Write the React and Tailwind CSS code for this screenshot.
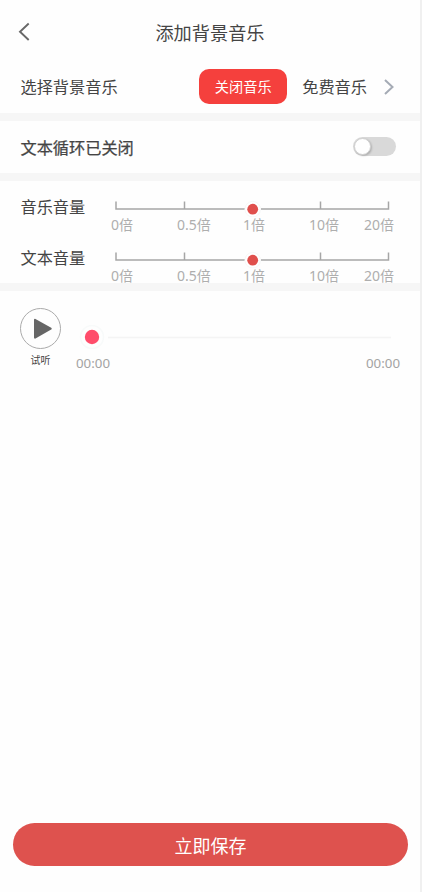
const steps = ['0倍', '0.5倍', '1倍', '10倍', '20倍'];

function Divider() {
  return <div className="h-2 shrink-0 bg-[#f6f6f6]" />;
}

function VolumeRow({ label }) {
  return (
    <div className="flex h-[51px] pl-[20.5px]">
      <div className="w-[90.5px] pt-[13px] text-[16.2px] leading-6">{label}</div>
      <div className="pt-4">
        <svg className="block" width="284" height="20" fill="none">
          <path d="M5 4.5V12H134M150 12H277.5V4.5M73.5 4.5V12M209.5 4.5V12" stroke="#a6a6a6" strokeWidth="1.5" />
          <circle cx="141.7" cy="12.2" r="7.8" fill="#fff" stroke="#f4f5f5" strokeWidth="0.8" />
          <circle cx="141.7" cy="12.2" r="5.4" fill="#e04f4c" />
        </svg>
        <div className="grid grid-cols-[66px_66px_66px_55px_31px] font-['Noto_Sans','Noto_Sans_CJK_SC',sans-serif] text-sm leading-4 text-[#aeaeae]">
          {steps.map((step) => (
            <span key={step} className="whitespace-nowrap">{step}</span>
          ))}
        </div>
      </div>
    </div>
  );
}

export default function App() {
  return (
    <div className="flex h-[892px] w-[422px] flex-col overflow-hidden border-r-2 border-[#f0f0f0] bg-[#fefefe] font-['Noto_Sans_CJK_SC',sans-serif] text-[#444]">
      <header className="grid h-[61px] grid-cols-[60px_1fr_60px] items-center pt-0.5">
        <button className="pl-[18px]" aria-label="返回">
          <svg width="13" height="20" fill="none" stroke="#686868" strokeWidth="1.9">
            <path d="M10.7 1.5L2 9.7L10.7 18" />
          </svg>
        </button>
        <h1 className="text-center text-[18.2px] leading-7">添加背景音乐</h1>
      </header>

      <section className="flex h-[52px] items-center pb-px pl-[20.5px] text-[16.2px]">
        <span>选择背景音乐</span>
        <button className="ml-auto h-[35px] w-[88px] rounded-[10px] bg-[#f5403d] text-[14.2px] text-white">关闭音乐</button>
        <span className="ml-[15px]">免费音乐</span>
        <svg className="mr-[25px] ml-[16px]" width="12" height="16" fill="none" stroke="#a5abb5" strokeWidth="2">
          <path d="M2 1L9.5 8L2 15" />
        </svg>
      </section>
      <Divider />

      <section className="flex h-[52px] items-center justify-between pr-6 pb-px pl-[20.5px]">
        <span className="pt-px text-[16.2px] [-webkit-text-stroke:0.25px_#444]">文本循环已关闭</span>
        <button className="h-[19px] w-[43px] rounded-full bg-[#d9d9d9] p-px" aria-label="文本循环">
          <span className="block size-[17px] rounded-full border border-[#d0d0d0] bg-white shadow-[1px_1px_2px_rgba(0,0,0,0.2)]" />
        </button>
      </section>
      <Divider />

      <section className="h-[102px]">
        <VolumeRow label="音乐音量" />
        <VolumeRow label="文本音量" />
      </section>
      <Divider />

      <section className="flex pt-[17px] pl-5">
        <div className="w-[41px]">
          <svg className="block" width="41" height="41">
            <circle cx="20.5" cy="20.5" r="20" fill="#fefefe" stroke="#aaa" />
            <path d="M15 11.8L30.7 20.7L15 29.6Z" fill="#666" stroke="#666" strokeWidth="2" strokeLinejoin="round" />
          </svg>
          <div className="pt-[3px] text-center text-[10px] leading-4">试听</div>
        </div>
        <div className="ml-[15px] w-[324px] pt-[17px]">
          <svg className="block" width="324" height="24">
            <path d="M32 12.5H315" stroke="#f4f4f4" strokeWidth="1.5" />
            <circle cx="16" cy="12" r="11.5" fill="#fefefe" stroke="#f8fafa" strokeWidth="1.5" />
            <circle cx="16" cy="12" r="7.2" fill="#ff4d6b" />
          </svg>
          <div className="flex justify-between pt-1 font-['Noto_Sans',sans-serif] text-[13.3px] leading-5 text-[#a3a3a3]">
            <span>00:00</span>
            <span>00:00</span>
          </div>
        </div>
      </section>

      <button className="mt-auto mr-3 mb-[26px] ml-[13px] h-[43px] shrink-0 rounded-full bg-[#de524e] text-lg text-white">立即保存</button>
    </div>
  );
}
